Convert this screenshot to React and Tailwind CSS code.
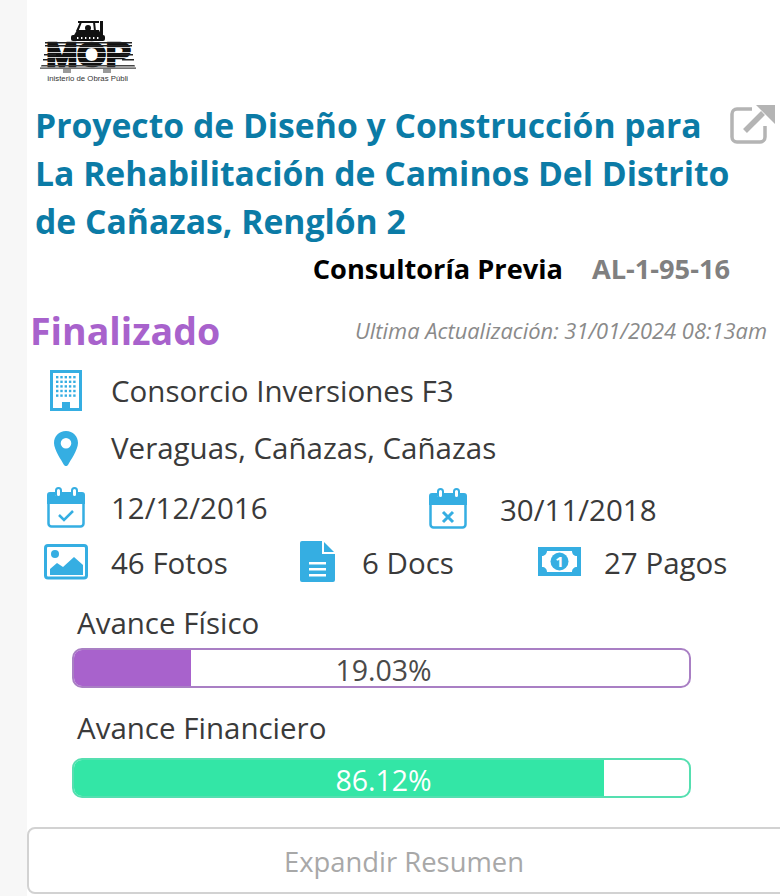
const ICON = '#35aee2'

function MopLogo() {
  return (
    <svg width="100" height="52" viewBox="0 0 100 52">
      {/* tractor */}
      <path d="M38 0h21v2H38z" fill="#111" />
      <path d="M40 1l-4 9h2.500l3.500-9zM55 1l1 9h-2l-1-9z" fill="#111" />
      <path d="M60 0h3v16h-3z" fill="#111" />
      <path d="M37 9h22l3 7H33z" fill="#111" />
      <circle cx="48" cy="7" r="3" fill="#111" />
      <rect x="31" y="14" width="34" height="6" rx="2" fill="#111" />
      <g fill="#fff">
        <rect x="37" y="16" width="1.400" height="2" />
        <rect x="41" y="16" width="1.400" height="2" />
        <rect x="45" y="16" width="1.400" height="2" />
        <rect x="49" y="16" width="1.400" height="2" />
        <rect x="53" y="16" width="1.400" height="2" />
        <rect x="57" y="16" width="1.400" height="2" />
      </g>
      {/* blade with stencil letters */}
      <text x="48.500" y="45" textAnchor="middle" fontFamily="Liberation Sans" fontWeight="700" fontSize="33" textLength="84" lengthAdjust="spacingAndGlyphs" fill="#111" stroke="#111" strokeWidth="2.600">MOP</text>
      <g fill="#fff">
        <rect x="0" y="26" width="100" height="0.800" />
        <rect x="0" y="31" width="100" height="0.800" />
        <rect x="0" y="36" width="100" height="0.800" />
        <rect x="0" y="41" width="100" height="0.800" />
      </g>
      <path d="M5 21h87v1.500H5zM5 24h87v1.500H5zM4 33h12v1.500H4zM80 33h13v1.500H80zM3 38h12v1.500H3zM82 38h12v1.500H82z" fill="#222" />
      <path d="M1.500 44h93l.500 1.500H1zM0 46.500h96v1.200H0z" fill="#444" />
      <rect x="23" y="48" width="8" height="4" fill="#999" />
      <rect x="63" y="48" width="8" height="4" fill="#999" />
    </svg>
  )
}

function ExternalIcon() {
  return (
    <svg width="46" height="40" viewBox="0 0 46 40" fill="none" className="shrink-0">
      <path d="M22 5H7a5 5 0 0 0-5 5v23a5 5 0 0 0 5 5h23a5 5 0 0 0 5-5V22" stroke="#b4b4b4" strokeWidth="3.500" />
      <path d="M15 27 33 9" stroke="#b4b4b4" strokeWidth="5.500" />
      <path d="M26 1h19v19z" fill="#b4b4b4" />
    </svg>
  )
}

function BuildingIcon() {
  const dots = []
  for (let y = 6; y < 29; y += 4.600) {
    for (let x = 6; x < 25; x += 4.300) dots.push(<rect key={`${x}-${y}`} x={x} y={y} width="2.400" height="2.400" />)
  }
  return (
    <svg width="32" height="41" viewBox="0 0 32 41" fill={ICON}>
      <path fillRule="evenodd" d="M0 0h32v41H0zM3 3v35h26V3z" />
      {dots}
      <rect x="12" y="32" width="8" height="7" />
    </svg>
  )
}

function PinIcon() {
  return (
    <svg width="24" height="35" viewBox="0 0 24 35" fill={ICON}>
      <path fillRule="evenodd" d="M12 0C5 0 0 5 0 12c0 7 8 18 10 22 1 1.500 3 1.500 4 0 2-4 10-15 10-22C24 5 19 0 12 0zm0 7a5.300 5.300 0 1 1 0 10.600A5.300 5.300 0 0 1 12 7z" />
    </svg>
  )
}

function CalendarIcon({ children }) {
  return (
    <svg width="38" height="41" viewBox="0 0 38 41" fill="none">
      <path d="M3 5h5v4h5V5h12v4h5V5h5a3 3 0 0 1 3 3v9H0V8a3 3 0 0 1 3-3z" fill={ICON} />
      <path d="M1.500 14v22.500a3 3 0 0 0 3 3h29a3 3 0 0 0 3-3V14" stroke={ICON} strokeWidth="2.500" />
      <rect x="9" y="1" width="5" height="9" rx="2.500" stroke={ICON} strokeWidth="2" />
      <rect x="25" y="1" width="5" height="9" rx="2.500" stroke={ICON} strokeWidth="2" />
      {children}
    </svg>
  )
}

function ImageIcon() {
  return (
    <svg width="44" height="36" viewBox="0 0 44 36" fill="none">
      <rect x="1.500" y="1.500" width="41" height="32.500" rx="2.500" stroke={ICON} strokeWidth="3" />
      <circle cx="11" cy="10" r="4" fill={ICON} />
      <path d="M6 31V25l7-6 6 4 11-10 9 8v10z" fill={ICON} />
    </svg>
  )
}

function DocIcon() {
  return (
    <svg width="35" height="41" viewBox="0 0 35 41" fill={ICON}>
      <path fillRule="evenodd" d="M2 0h20v13h13v26a2 2 0 0 1-2 2H2a2 2 0 0 1-2-2V2a2 2 0 0 1 2-2zm7 21v2.500h17V21zm0 6v2.500h17V27zm0 6v2.500h17V33z" />
      <path d="M24 1l10 10H24z" />
    </svg>
  )
}

function MoneyIcon() {
  return (
    <svg width="43" height="29" viewBox="0 0 43 29" fill={ICON}>
      <path fillRule="evenodd" d="M0 0h43v29H0zM9 4c0 3-3 5-5 5v11c3 0 5 2 5 5h25c0-3 2-5 5-5V9c-3 0-5-2-5-5z" />
      <circle cx="21.500" cy="14.500" r="9" />
      <text x="21.500" y="20" textAnchor="middle" fontFamily="Open Sans" fontWeight="700" fontSize="15" fill="#fff">1</text>
    </svg>
  )
}

function IconCell({ children }) {
  return <div className="w-[44px] flex justify-center shrink-0">{children}</div>
}

function Progress({ label, value, fill, border, textColor, mt, gap }) {
  return (
    <div className={mt}>
      <div className="pl-[50px] text-[29.500px] leading-[38px] text-[#3a3a3a]">{label}</div>
      <div className={`relative ${gap} ml-[45px] w-[619px] h-[40px] rounded-[10px] border-2 overflow-hidden bg-white ${border}`}>
        <div className={`h-full ${fill}`} style={{ width: `${value}%` }} />
        <div className={`absolute inset-0 flex items-center justify-center pl-[4px] pt-[4px] text-[28.500px] ${textColor}`}>{value}%</div>
      </div>
    </div>
  )
}

export default function App() {
  return (
    <div className="min-h-[896px] h-[896px] w-[780px] overflow-hidden bg-[#f7f7f7] pl-[27px] font-['Open_Sans',sans-serif]">
      <div className="bg-white h-full relative">
        <div className="pt-[21px] pl-[13px] h-[75px] relative">
          <MopLogo />
          <div className="absolute top-[73px] left-[20px] w-[81px] overflow-hidden whitespace-nowrap indent-[-6px] text-[7.800px] leading-[11px] text-[#333] font-['Liberation_Sans',sans-serif]">Ministerio de Obras Públicas</div>
        </div>

        <div className="flex items-start pl-[8px] pt-[26px]">
          <h1 className="w-[707px] shrink-0 text-[33.700px] leading-[48px] font-bold text-[#0b7ba6]">
            Proyecto de Diseño y Construcción para La Rehabilitación de Caminos Del Distrito de Cañazas, Renglón 2
          </h1>
          <div className="pt-[3px] -ml-[12px]"><ExternalIcon /></div>
        </div>

        <div className="flex justify-end items-center h-[48px] pr-[50px] text-[27.200px] font-bold">
          <span className="text-black">Consultoría Previa</span>
          <span className="ml-[29px] text-[#808080]">AL-1-95-16</span>
        </div>

        <div className="flex items-center justify-between h-[60px] pl-[3px] pr-[13px] mt-[8px]">
          <span className="text-[37.500px] font-bold text-[#a862cc]">Finalizado</span>
          <span className="text-[21.900px] italic text-[#8a8a8a]">Ultima Actualización: 31/01/2024 08:13am</span>
        </div>

        <div className="pl-[17px] text-[#3a3a3a] text-[29.500px]">
          <div className="flex items-center h-[58px] pt-[1px]">
            <IconCell><BuildingIcon /></IconCell>
            <span className="ml-[23px] mt-[1px]">Consorcio Inversiones F3</span>
          </div>
          <div className="flex items-center h-[58px]">
            <IconCell><PinIcon /></IconCell>
            <span className="ml-[23px]">Veraguas, Cañazas, Cañazas</span>
          </div>
          <div className="flex items-center h-[60px]">
            <IconCell><CalendarIcon><path d="M12 28l5 5 9-9" stroke={ICON} strokeWidth="2.500" /></CalendarIcon></IconCell>
            <span className="ml-[23px] mt-[2px] w-[318px]">12/12/2016</span>
            <div className="mt-[3px]"><CalendarIcon><path d="M14 24l10 10M24 24 14 34" stroke={ICON} strokeWidth="3" /></CalendarIcon></div>
            <span className="ml-[33px] mt-[6px]">30/11/2018</span>
          </div>
          <div className="flex items-center h-[48px] pt-[1px]">
            <IconCell><ImageIcon /></IconCell>
            <span className="ml-[23px] mt-[4px] w-[189px]">46 Fotos</span>
            <DocIcon />
            <span className="ml-[27px] mt-[4px] w-[176px]">6 Docs</span>
            <MoneyIcon />
            <span className="ml-[23px] mt-[4px]">27 Pagos</span>
          </div>
        </div>

        <Progress mt="mt-[19px]" gap="mt-[6px]" label="Avance Físico" value="19.03" fill="bg-[#a862cc]" border="border-[#a97fc4]" textColor="text-[#4a4a4a]" />
        <Progress mt="mt-[21px]" gap="mt-[11px]" label="Avance Financiero" value="86.12" fill="bg-[#33e6a6]" border="border-[#55dfb0]" textColor="text-white" />

        <button className="mt-[29px] w-[770px] h-[67px] rounded-[8px] border-2 border-[#d2d2d2] bg-white pr-[16px] pt-[3px] text-[27.400px] font-medium text-[#a8a8a8]">
          Expandir Resumen
        </button>
      </div>
    </div>
  )
}
